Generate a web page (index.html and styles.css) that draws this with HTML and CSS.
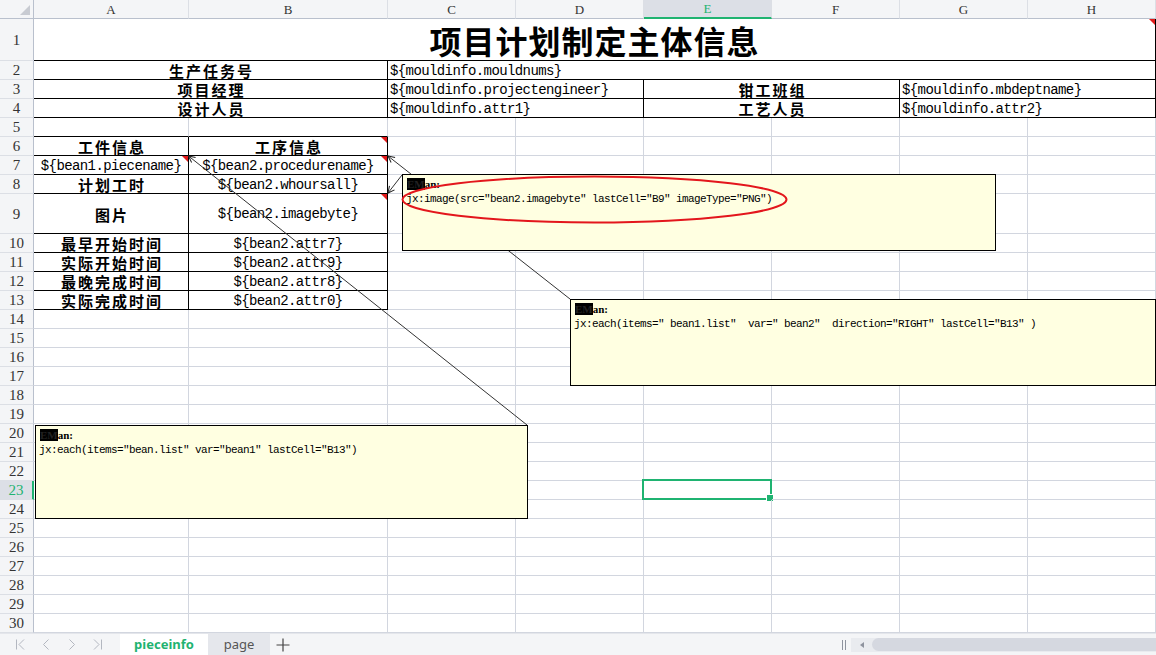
FILE: index.html
```html
<!DOCTYPE html>
<html lang="zh-CN">
<head>
<meta charset="utf-8">
<title>pieceinfo</title>
<link rel="stylesheet" href="styles.css">
</head>
<body>
<div class="sheet">
  <!-- header -->
  <div class="corner"></div>
  <div class="ch">A</div><div class="ch">B</div><div class="ch">C</div><div class="ch">D</div><div class="ch on">E</div><div class="ch">F</div><div class="ch">G</div><div class="ch">H</div>

  <!-- row 1 -->
  <div class="rh">1</div>
  <div class="c s8 bb br title">项目计划制定主体信息<span class="tri"></span></div>

  <!-- row 2 -->
  <div class="rh">2</div>
  <div class="c s2 bb br lbl">生产任务号</div>
  <div class="c s6 bb br mono val">${mouldinfo.mouldnums}</div>

  <!-- row 3 -->
  <div class="rh">3</div>
  <div class="c s2 bb br lbl">项目经理</div>
  <div class="c s2 bb br mono val">${mouldinfo.projectengineer}</div>
  <div class="c s2 bb br lbl">钳工班组</div>
  <div class="c s2 bb br mono val">${mouldinfo.mbdeptname}</div>

  <!-- row 4 -->
  <div class="rh">4</div>
  <div class="c s2 bb br lbl">设计人员</div>
  <div class="c s2 bb br mono val">${mouldinfo.attr1}</div>
  <div class="c s2 bb br lbl">工艺人员</div>
  <div class="c s2 bb br mono val">${mouldinfo.attr2}</div>

  <!-- row 5 -->
  <div class="rh">5</div>
  <div class="c bb"></div><div class="c bb"></div>
  <div class="c"></div><div class="c"></div><div class="c"></div><div class="c"></div><div class="c"></div><div class="c"></div>

  <!-- row 6 -->
  <div class="rh">6</div>
  <div class="c bb br lbl">工件信息</div>
  <div class="c bb br lbl">工序信息<span class="tri"></span></div>
  <div class="c"></div><div class="c"></div><div class="c"></div><div class="c"></div><div class="c"></div><div class="c"></div>

  <!-- row 7 -->
  <div class="rh">7</div>
  <div class="c bb br mono">${bean1.piecename}<span class="tri"></span></div>
  <div class="c bb br mono">${bean2.procedurename}<span class="tri"></span></div>
  <div class="c"></div><div class="c"></div><div class="c"></div><div class="c"></div><div class="c"></div><div class="c"></div>

  <!-- row 8 -->
  <div class="rh">8</div>
  <div class="c bb br lbl">计划工时</div>
  <div class="c bb br mono">${bean2.whoursall}</div>
  <div class="c"></div><div class="c"></div><div class="c"></div><div class="c"></div><div class="c"></div><div class="c"></div>

  <!-- row 9 -->
  <div class="rh">9</div>
  <div class="c bb br lbl">图片</div>
  <div class="c bb br mono">${bean2.imagebyte}<span class="tri"></span></div>
  <div class="c"></div><div class="c"></div><div class="c"></div><div class="c"></div><div class="c"></div><div class="c"></div>

  <!-- row 10 -->
  <div class="rh">10</div>
  <div class="c bb br lbl">最早开始时间</div>
  <div class="c bb br mono">${bean2.attr7}</div>
  <div class="c"></div><div class="c"></div><div class="c"></div><div class="c"></div><div class="c"></div><div class="c"></div>

  <!-- row 11 -->
  <div class="rh">11</div>
  <div class="c bb br lbl">实际开始时间</div>
  <div class="c bb br mono">${bean2.attr9}</div>
  <div class="c"></div><div class="c"></div><div class="c"></div><div class="c"></div><div class="c"></div><div class="c"></div>

  <!-- row 12 -->
  <div class="rh">12</div>
  <div class="c bb br lbl">最晚完成时间</div>
  <div class="c bb br mono">${bean2.attr8}</div>
  <div class="c"></div><div class="c"></div><div class="c"></div><div class="c"></div><div class="c"></div><div class="c"></div>

  <!-- row 13 -->
  <div class="rh">13</div>
  <div class="c bb br lbl">实际完成时间</div>
  <div class="c bb br mono">${bean2.attr0}</div>
  <div class="c"></div><div class="c"></div><div class="c"></div><div class="c"></div><div class="c"></div><div class="c"></div>

  <div class="rh">14</div><div class="c"></div><div class="c"></div><div class="c"></div><div class="c"></div><div class="c"></div><div class="c"></div><div class="c"></div><div class="c"></div>
  <div class="rh">15</div><div class="c"></div><div class="c"></div><div class="c"></div><div class="c"></div><div class="c"></div><div class="c"></div><div class="c"></div><div class="c"></div>
  <div class="rh">16</div><div class="c"></div><div class="c"></div><div class="c"></div><div class="c"></div><div class="c"></div><div class="c"></div><div class="c"></div><div class="c"></div>
  <div class="rh">17</div><div class="c"></div><div class="c"></div><div class="c"></div><div class="c"></div><div class="c"></div><div class="c"></div><div class="c"></div><div class="c"></div>
  <div class="rh">18</div><div class="c"></div><div class="c"></div><div class="c"></div><div class="c"></div><div class="c"></div><div class="c"></div><div class="c"></div><div class="c"></div>
  <div class="rh">19</div><div class="c"></div><div class="c"></div><div class="c"></div><div class="c"></div><div class="c"></div><div class="c"></div><div class="c"></div><div class="c"></div>
  <div class="rh">20</div><div class="c"></div><div class="c"></div><div class="c"></div><div class="c"></div><div class="c"></div><div class="c"></div><div class="c"></div><div class="c"></div>
  <div class="rh">21</div><div class="c"></div><div class="c"></div><div class="c"></div><div class="c"></div><div class="c"></div><div class="c"></div><div class="c"></div><div class="c"></div>
  <div class="rh">22</div><div class="c"></div><div class="c"></div><div class="c"></div><div class="c"></div><div class="c"></div><div class="c"></div><div class="c"></div><div class="c"></div>
  <div class="rh on">23</div><div class="c"></div><div class="c"></div><div class="c"></div><div class="c"></div><div class="c"><span class="sel"></span></div><div class="c"></div><div class="c"></div><div class="c"></div>
  <div class="rh">24</div><div class="c"></div><div class="c"></div><div class="c"></div><div class="c"></div><div class="c"></div><div class="c"></div><div class="c"></div><div class="c"></div>
  <div class="rh">25</div><div class="c"></div><div class="c"></div><div class="c"></div><div class="c"></div><div class="c"></div><div class="c"></div><div class="c"></div><div class="c"></div>
  <div class="rh">26</div><div class="c"></div><div class="c"></div><div class="c"></div><div class="c"></div><div class="c"></div><div class="c"></div><div class="c"></div><div class="c"></div>
  <div class="rh">27</div><div class="c"></div><div class="c"></div><div class="c"></div><div class="c"></div><div class="c"></div><div class="c"></div><div class="c"></div><div class="c"></div>
  <div class="rh">28</div><div class="c"></div><div class="c"></div><div class="c"></div><div class="c"></div><div class="c"></div><div class="c"></div><div class="c"></div><div class="c"></div>
  <div class="rh">29</div><div class="c"></div><div class="c"></div><div class="c"></div><div class="c"></div><div class="c"></div><div class="c"></div><div class="c"></div><div class="c"></div>
  <div class="rh">30</div><div class="c"></div><div class="c"></div><div class="c"></div><div class="c"></div><div class="c"></div><div class="c"></div><div class="c"></div><div class="c"></div>
</div>

<!-- comment connector lines (under the comment boxes) -->
<svg class="links" width="1156" height="633" viewBox="0 0 1156 633">
  <defs>
    <marker id="ah" markerWidth="9" markerHeight="9" refX="7" refY="4" orient="auto" markerUnits="userSpaceOnUse">
      <path d="M0.5,0.8 L7,4 L0.5,7.2" fill="none" stroke="#222" stroke-width="1"/>
    </marker>
  </defs>
  <line x1="527" y1="425" x2="188.5" y2="156" stroke="#333" stroke-width="1" marker-end="url(#ah)"/>
  <line x1="570" y1="299" x2="388" y2="156" stroke="#333" stroke-width="1" marker-end="url(#ah)"/>
  <line x1="402" y1="175" x2="388" y2="193" stroke="#333" stroke-width="1" marker-end="url(#ah)"/>
</svg>

<div class="note n1">
  <div class="who"><span class="blot">EM</span>an:</div>
  <div class="code">jx:image(src="bean2.imagebyte" lastCell="B9" imageType="PNG")</div>
</div>
<div class="note n2">
  <div class="who"><span class="blot">EM</span>an:</div>
  <div class="code">jx:each(items=" bean1.list"  var=" bean2"  direction="RIGHT" lastCell="B13" )</div>
</div>
<div class="note n3">
  <div class="who"><span class="blot">EM</span>an:</div>
  <div class="code">jx:each(items="bean.list" var="bean1" lastCell="B13")</div>
</div>

<svg class="mark" width="392" height="52" viewBox="0 0 392 52">
  <ellipse cx="194.5" cy="25.5" rx="192" ry="23" fill="none" stroke="#e3161c" stroke-width="2"/>
</svg>

<div class="tabs">
  <div class="nav">
    <span class="nb"><svg width="10" height="11" viewBox="0 0 10 11"><path d="M1.5,0.5 V10.5 M9,0.5 L4,5.5 L9,10.5" fill="none" stroke="#b3b7c0" stroke-width="1"/></svg></span>
    <span class="nb"><svg width="10" height="11" viewBox="0 0 10 11"><path d="M7.5,0.5 L2.5,5.5 L7.5,10.5" fill="none" stroke="#b3b7c0" stroke-width="1"/></svg></span>
    <span class="nb"><svg width="10" height="11" viewBox="0 0 10 11"><path d="M2.5,0.5 L7.5,5.5 L2.5,10.5" fill="none" stroke="#b3b7c0" stroke-width="1"/></svg></span>
    <span class="nb"><svg width="10" height="11" viewBox="0 0 10 11"><path d="M1,0.5 L6,5.5 L1,10.5 M8.5,0.5 V10.5" fill="none" stroke="#b3b7c0" stroke-width="1"/></svg></span>
  </div>
  <div class="tab active">pieceinfo</div>
  <div class="tab">page</div>
  <div class="plus"><svg width="14" height="14" viewBox="0 0 14 14"><path d="M7,0.5 V13.5 M0.5,7 H13.5" fill="none" stroke="#444" stroke-width="1.2"/></svg></div>
  <div class="hbar">
    <span class="grip"></span>
    <div class="track">
      <span class="larr"><span class="tip"></span></span>
      <span class="thumb"></span>
    </div>
  </div>
</div>
</body>
</html>
```

FILE: styles.css
```css
* { box-sizing: border-box; }
html, body { margin: 0; padding: 0; }
body {
  width: 1156px;
  height: 655px;
  overflow: hidden;
  position: relative;
  background: #fff;
  font-family: "Liberation Sans", sans-serif;
  color: #000;
}

.sheet {
  display: grid;
  grid-template-columns: 34px 155px 199px repeat(6, 128px);
  grid-template-rows: 19px 42px repeat(7, 19px) 40px repeat(21, 19px);
}

.c {
  position: relative;
  display: flex;
  align-items: center;
  justify-content: center;
  white-space: nowrap;
  min-width: 0;
  border-right: 1px solid #d2d6df;
  border-bottom: 1px solid #d2d6df;
}
.s2 { grid-column: span 2; }
.s6 { grid-column: span 6; }
.s8 { grid-column: span 8; }
.bb { border-bottom-color: #000; }
.br { border-right-color: #000; }

.corner {
  position: relative;
  background: #f4f5f7;
  border-right: 1px solid #b9c0cd;
  border-bottom: 1px solid #b9c0cd;
}
.corner::after {
  content: "";
  position: absolute;
  left: 20px;
  top: 5px;
  border-left: 10px solid transparent;
  border-bottom: 10px solid #c8cbd2;
}

.ch {
  display: flex;
  align-items: center;
  justify-content: center;
  background: #f4f5f7;
  border-right: 1px solid #dcdfe5;
  border-bottom: 1px solid #b9c0cd;
  font: 13px/1 "Liberation Serif", serif;
  color: #333;
}
.ch.on {
  background: #dcdfe6;
  color: #1fb371;
  border-bottom: 2px solid #1fb371;
}

.rh {
  display: flex;
  align-items: center;
  justify-content: center;
  background: #f4f5f7;
  border-right: 1px solid #b9c0cd;
  border-bottom: 1px solid #dcdfe5;
  font: 15px/1 "Liberation Serif", serif;
  color: #333;
  padding-top: 1px;
}
.rh.on {
  background: #dcdfe6;
  color: #1fb371;
  border-right: 2px solid #1fb371;
}

.title {
  font: 700 32px/1 "Noto Sans CJK SC", sans-serif;
  letter-spacing: 1px;
}
.lbl {
  font: 700 15px/16px "Noto Sans CJK SC", sans-serif;
  letter-spacing: 2px;
  padding-top: 2px;
  padding-left: 2px;
}
.mono {
  font: 14px/18px "Liberation Mono", monospace;
  letter-spacing: -0.6px;
  padding-top: 1px;
}
.val {
  justify-content: flex-start;
  padding-left: 2px;
}

.tri {
  position: absolute;
  top: 0;
  right: 0;
  border-top: 6px solid #e21b1b;
  border-left: 6px solid transparent;
}

.sel {
  position: absolute;
  left: -2px;
  top: -2px;
  right: -1px;
  bottom: -1px;
  border: 2px solid #1fb371;
}
.sel::after {
  content: "";
  position: absolute;
  right: -3px;
  bottom: -3px;
  width: 6px;
  height: 6px;
  background: #1fb371;
  border-left: 1px solid #fff;
  border-top: 1px solid #fff;
}

.links {
  position: absolute;
  left: 0;
  top: 0;
  z-index: 1;
}

.note {
  position: absolute;
  z-index: 2;
  background: #ffffe1;
  border: 1px solid #000;
  padding: 2px 3px;
  font: 11px/15px "Liberation Mono", monospace;
  letter-spacing: -0.6px;
  overflow: hidden;
}
.note .code {
  white-space: pre;
}
.note .who {
  font: 700 11px/15px "Liberation Serif", serif;
  letter-spacing: 0;
  padding-left: 1px;
  white-space: nowrap;
}
.blot {
  background: #000;
  color: #222;
}
.n1 { left: 402px; top: 174px; width: 594px; height: 77px; }
.n2 { left: 570px; top: 299px; width: 586px; height: 87px; }
.n3 { left: 35px; top: 425px; width: 493px; height: 94px; }

.mark {
  position: absolute;
  left: 400px;
  top: 174px;
  z-index: 3;
}

.tabs {
  display: flex;
  align-items: stretch;
  height: 22px;
  background: #f4f5f7;
  border-top: 1px solid #e4e6eb;
}
.nav {
  display: flex;
  align-items: center;
  width: 120px;
  padding-left: 15px;
}
.nb {
  display: flex;
  width: 26px;
}
.tab {
  display: flex;
  align-items: center;
  justify-content: center;
  width: 62px;
  background: #e5e7ec;
  color: #555;
  font: 13px/1 "Noto Sans", sans-serif;
}
.tab.active {
  width: 88px;
  background: #fff;
  color: #1fb371;
  font-weight: 700;
}
.plus {
  display: flex;
  align-items: center;
  padding-left: 6px;
}
.hbar {
  display: flex;
  align-items: center;
  margin-left: auto;
}
.grip {
  width: 4px;
  height: 10px;
  border-left: 1px solid #8e939e;
  border-right: 1px solid #8e939e;
  margin-right: 5px;
}
.track {
  display: flex;
  align-items: center;
  width: 305px;
  height: 14px;
  background: #e9ebef;
}
.larr {
  display: flex;
  justify-content: center;
  width: 21px;
}
.tip {
  border-right: 4px solid #8e939e;
  border-top: 3px solid transparent;
  border-bottom: 3px solid transparent;
}
.thumb {
  flex: 1;
  height: 13px;
  background: #d5d8e0;
  border-radius: 7px 0 0 7px;
}
```
